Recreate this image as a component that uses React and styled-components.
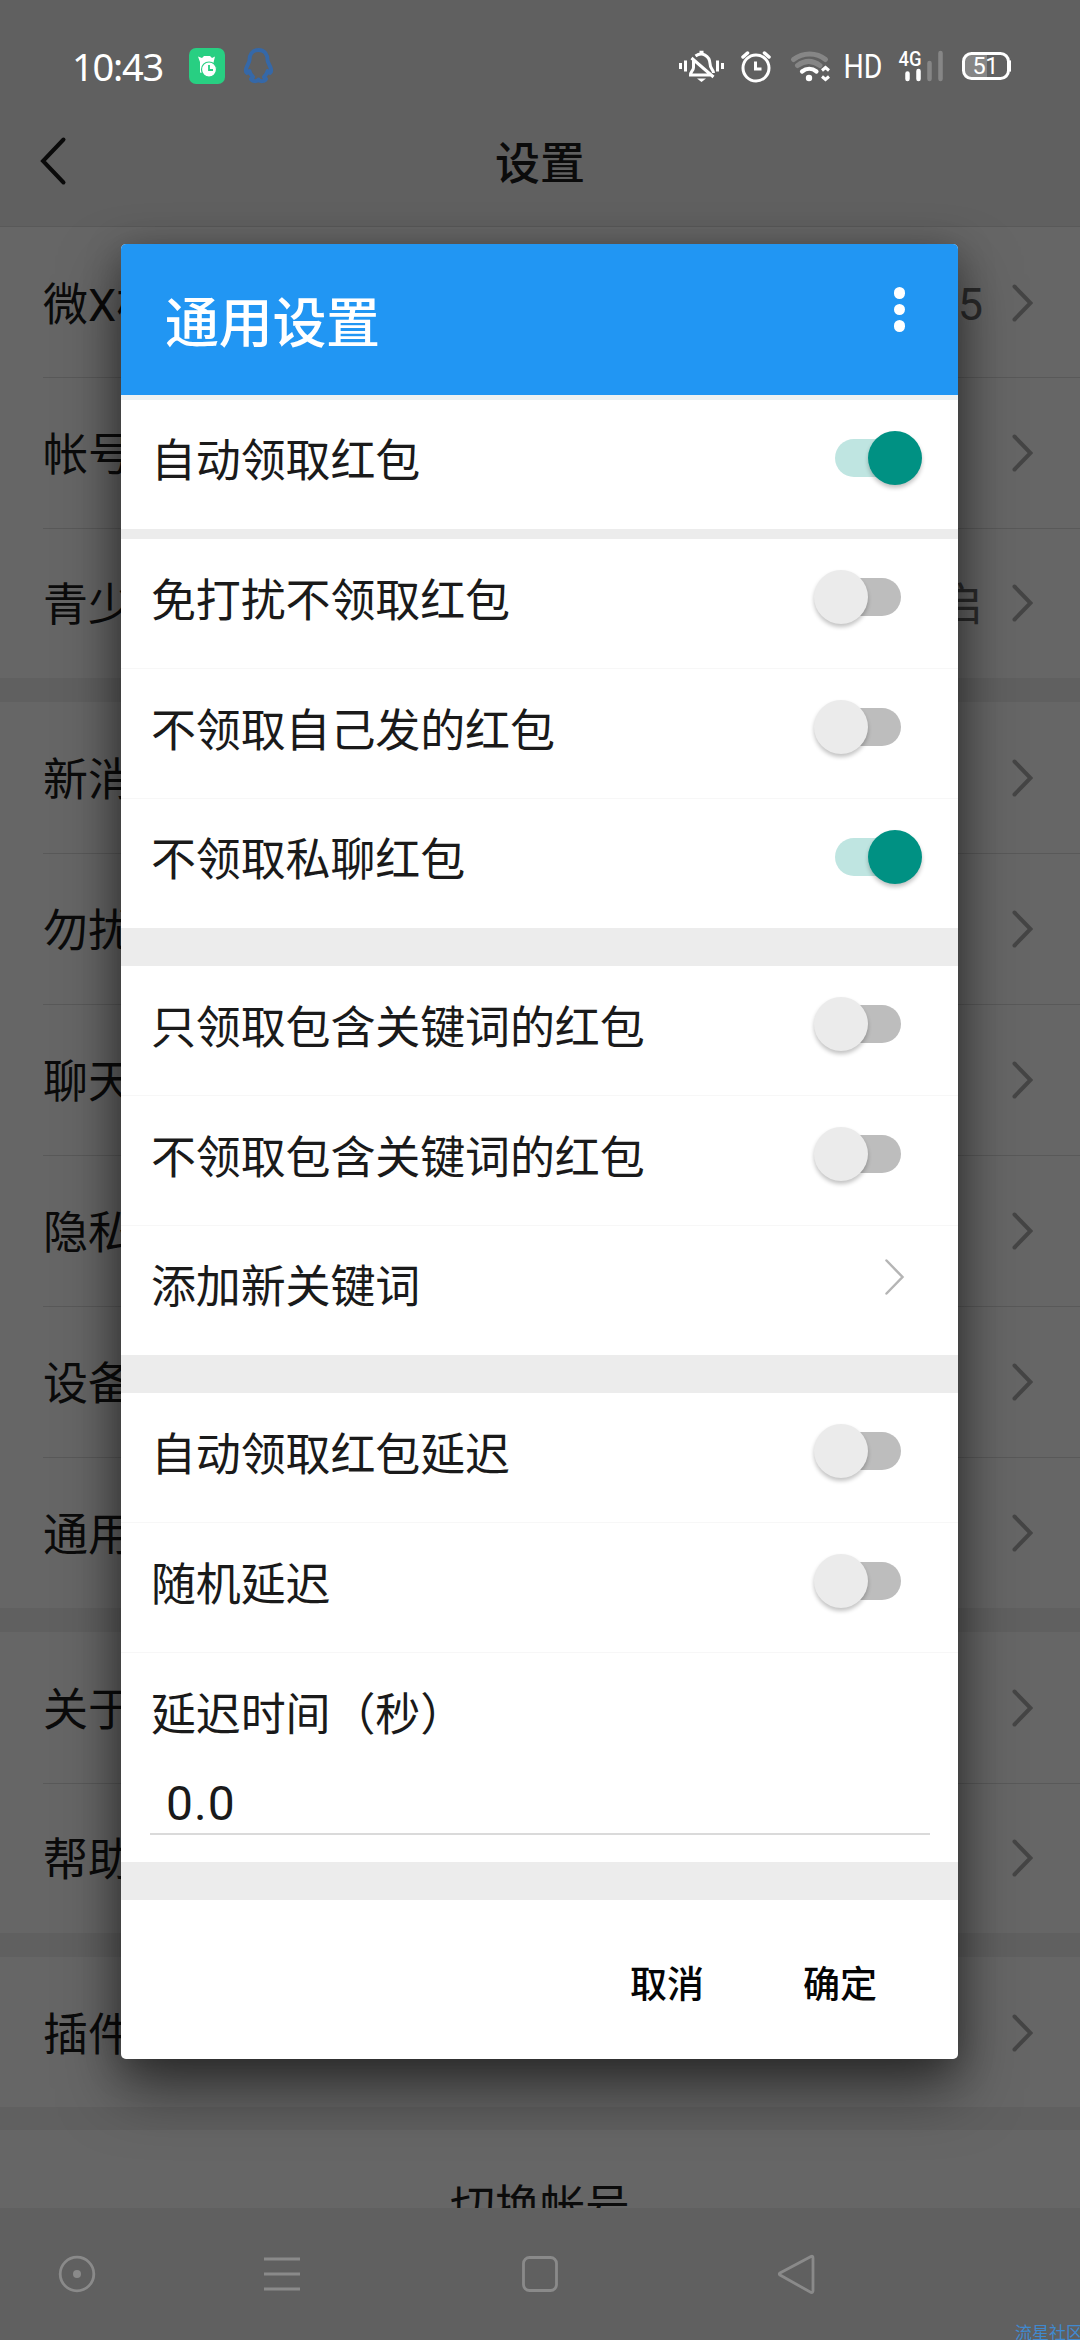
import React from "react";
import styled, { createGlobalStyle } from "styled-components";

const Global = createGlobalStyle`
  * { box-sizing: border-box; }
  html, body { margin: 0; padding: 0; background: #666; }
  body { width: 1080px; height: 2340px; overflow: hidden; }
`;

const Screen = styled.div`
  position: relative;
  width: 1080px;
  height: 2340px;
  overflow: hidden;
  display: flex;
  flex-direction: column;
  background: #606060;
  color: #0b0b0b;
  font-family: Roboto, "Noto Sans CJK SC", sans-serif;
  font-size: 45px;
  line-height: 1;
`;

const StatusBar = styled.header`
  height: 96px;
  flex: none;
  padding: 36px 69px 0 72px;
  display: flex;
  align-items: center;
  justify-content: space-between;
  color: #fff;
`;

const StatusGroup = styled.div`
  display: flex;
  align-items: center;
  height: 60px;
`;

const Clock = styled.span`
  width: 117px;
  font-family: "Noto Sans", Roboto, sans-serif;
  font-size: 38px;
  letter-spacing: -1.2px;
`;

const TitleBar = styled.div`
  height: 131px;
  flex: none;
  display: grid;
  grid-template-columns: 120px 1fr 120px;
  align-items: center;
  border-bottom: 1px solid #595959;
`;

const BackButton = styled.span`
  display: flex;
  padding-left: 39px;
`;

const PageTitle = styled.h1`
  margin: 7px 0 0;
  text-align: center;
  font-size: 45px;
  font-weight: 500;
`;

const List = styled.main`
  flex: 1;
  min-height: 0;
  overflow: hidden;
  display: flex;
  flex-direction: column;
`;

const Group = styled.section`
  flex: none;
  height: ${(p) => p.$height}px;
  margin-bottom: ${(p) => p.$gap ?? 24}px;
  padding-left: 43px;
  display: flex;
  flex-direction: column;
  background: #666;
`;

const Row = styled.div`
  flex: 1;
  display: flex;
  align-items: center;
  padding-right: 47px;
  border-top: 1px solid ${(p) => (p.$first ? "#666" : "#595959")};
`;

const RowLabel = styled.span`
  flex: 1;
  white-space: nowrap;
  padding-top: 5px;
`;

const RowValue = styled.span`
  margin-right: 29px;
  padding-top: 4px;
  color: #2b2b2b;
`;

const SwitchAccount = styled.div`
  flex: none;
  height: 151px;
  padding-top: 3px;
  display: flex;
  align-items: center;
  justify-content: center;
  background: #666;
`;

const NavBar = styled.nav`
  flex: none;
  height: 132px;
  display: flex;
  align-items: center;
  padding-left: 57px;
`;

const NavItem = styled.span`
  display: flex;
  width: 40px;
  margin-right: ${(p) => p.$after}px;
`;

const Watermark = styled.span`
  position: absolute;
  left: 1015px;
  top: 2325px;
  font-size: 17px;
  line-height: 17px;
  white-space: nowrap;
  color: #4089cf;
`;

const Dialog = styled.div`
  position: absolute;
  left: 121px;
  top: 244px;
  width: 837px;
  height: 1815px;
  display: flex;
  flex-direction: column;
  overflow: hidden;
  border-radius: 5px;
  background: #fff;
  color: #1a1a1a;
`;

const DialogShadow = styled.div`
  position: absolute;
  left: 121px;
  top: 244px;
  width: 837px;
  height: 1815px;
  border-radius: 5px;
  box-shadow: 0 30px 60px rgba(0, 0, 0, 0.5), 0 6px 36px rgba(0, 0, 0, 0.26);
`;

const DialogHeader = styled.div`
  flex: none;
  height: 151px;
  padding: 0 53px 0 44px;
  display: flex;
  align-items: center;
  justify-content: space-between;
  background: #2196f3;
  color: #fff;
`;

const DialogTitle = styled.h2`
  margin: 11px 0 0;
  font-size: 54px;
  font-weight: 500;
  letter-spacing: -0.3px;
`;

const MoreDots = styled.span`
  display: flex;
  flex-direction: column;
  gap: 5px;
  margin-bottom: 20px;
`;

const Dot = styled.i`
  width: 11.5px;
  height: 11.5px;
  border-radius: 50%;
  background: #fff;
`;

const Band = styled.div`
  flex: none;
  height: ${(p) => p.$h}px;
  background: ${(p) => p.$color ?? "#ececec"};
`;

const Option = styled.div`
  flex: none;
  height: ${(p) => p.$h ?? 130}px;
  padding: 0 36px 11px 30px;
  display: flex;
  align-items: center;
  justify-content: space-between;
  border-bottom: 1px solid ${(p) => (p.$line ? "#f7f7f7" : "#fff")};
`;

const OptionLabel = styled.span`
  white-space: nowrap;
  padding-top: 6px;
  letter-spacing: -0.13px;
`;

const Track = styled.span`
  display: flex;
  align-items: center;
  width: 66px;
  height: 38px;
  margin-right: 21px;
  margin-top: -2px;
  border-radius: 19px;
  background: ${(p) => (p.$on ? "#bfe5e1" : "#bdbdbd")};
`;

const Thumb = styled.span`
  flex: none;
  width: 54px;
  height: 54px;
  border-radius: 50%;
  margin-left: ${(p) => (p.$on ? 33 : -21)}px;
  background: ${(p) => (p.$on ? "#009183" : "#ebebeb")};
  box-shadow: 0 3px 4px rgba(0, 0, 0, 0.24);
`;

const ArrowSlot = styled.span`
  display: flex;
  margin: -16px 17px 0 0;
`;

const Field = styled.div`
  flex: none;
  height: 79px;
  padding: 0 28px 0 29px;
`;

const FieldValue = styled.div`
  height: 52px;
  padding: 0 0 0 16px;
  border-bottom: 2px solid #dadada;
  font-size: 48px;
  line-height: 41px;
  letter-spacing: 1px;
`;

const Actions = styled.div`
  flex: 1;
  display: flex;
  justify-content: flex-end;
  align-items: center;
  gap: 99px;
  padding: 12px 81px 0 0;
`;

const ActionButton = styled.button`
  border: 0;
  padding: 0;
  background: none;
  font: 500 37px/1 Roboto, "Noto Sans CJK SC", sans-serif;
  color: #050505;
`;

const Chevron = ({ color = "#454545", width = 4 }) => (
  <svg width="21" height="38" viewBox="0 0 21 38" fill="none">
    <path d="M2.5 2.5 18.5 19 2.5 35.5" stroke={color} strokeWidth={width} strokeLinecap="round" />
  </svg>
);

const Toggle = ({ on }) => (
  <Track $on={on}>
    <Thumb $on={on} />
  </Track>
);

const AppIcons = () => (
  <svg width="90" height="60" viewBox="189 36 90 60" fill="none">
    <rect x="189" y="48" width="36" height="36" rx="7" fill="#28cf82" />
    <path d="M198 56.500l4 1.500 2-2h6l2 2 3-1.500-1 4-1 4h-6l-3 4v5l-4-1V62Z" fill="#fff" />
    <circle cx="209" cy="69.500" r="7.500" fill="#fff" stroke="#28cf82" strokeWidth="1.200" />
    <path d="M209 65v5h4" stroke="#28cf82" strokeWidth="1.800" />
    <path d="M258.500 50c-6.500 0-9 5-9 10 0 2-1.500 4-3 7.500-1 3-.500 5 .500 5.500l2.500-2c.500 3 2 4.500 3.500 6l-2 2c1 2.500 6 3 7.500.500 1.500 2.500 6.500 2 7.500-.500l-2-2c1.500-1.500 3-3 3.500-6l2.500 2c1-.500 1.500-2.500.500-5.500-1.500-3.500-3-5.500-3-7.500 0-5-2.500-10-9-10Z" stroke="#3568a8" strokeWidth="4" strokeLinejoin="round" />
  </svg>
);

const StatusIcons = () => (
  <svg width="336" height="60" viewBox="674 36 336 60" fill="none" stroke="#fff">
    <path d="M679.500 63v6M684.500 60.500v11M716.500 60.500v11M721.500 63v6" strokeWidth="3" />
    <path d="M694.500 56c6.500-4.500 14-.500 14.500 7.500 0 5.500 3.500 6 3.500 9.500M692.500 59.500v8c0 3-3 4-3 7.500h20M690.500 58l22 19" strokeWidth="3" />
    <path d="M698.500 52.500h4" strokeWidth="3.500" />
    <path d="M696 78.500h9l-4.500 3.500Z" fill="#fff" stroke="none" />
    <circle cx="755" cy="68" r="13" strokeWidth="3" />
    <path d="M742 57l4.500-4M768 57l-4.500-4" strokeWidth="3.500" strokeLinecap="round" />
    <path d="M754.500 61.500v7.500h6" strokeWidth="3" />
    <path d="M792.500 59.500c9.500-7.500 23-7.500 32 0" stroke="#868686" strokeWidth="5" strokeLinecap="round" />
    <path d="M796.500 65.500c7.500-5.500 15-5.500 22.500 0" stroke="#868686" strokeWidth="5" strokeLinecap="round" />
    <path d="M801 71.500c4.500-3.500 10-3.500 14.500 0" strokeWidth="4.200" strokeLinecap="round" />
    <circle cx="808" cy="78" r="3.200" fill="#fff" stroke="none" />
    <path d="M821 70.500l3.500-3 3.500 3M821 76.500l3.500 3 3.500-3" strokeWidth="3" />
    <path d="M906.500 73.500v5.500M917.500 71v8" strokeWidth="4.500" strokeLinecap="round" />
    <path d="M928.500 63v16M939.500 53v26" stroke="#868686" strokeWidth="4.500" strokeLinecap="round" />
    <path d="M969 54h17v25h-17a6 6 0 0 1-6-6V60a6 6 0 0 1 6-6Z" fill="#868686" stroke="none" />
    <rect x="962.500" y="53.500" width="45" height="25" rx="8" strokeWidth="3" />
    <path d="M1009 60.500q2 5.500 0 11" strokeWidth="3" />
    <g fill="#fff" stroke="none" fontFamily="Roboto, sans-serif">
      <text x="842.500" y="78" fontSize="34" textLength="39" lengthAdjust="spacingAndGlyphs">HD</text>
      <text x="897.500" y="65.500" fontSize="20.500" textLength="23" fontWeight="500" lengthAdjust="spacingAndGlyphs">4G</text>
      <text x="971.500" y="74" fontSize="23.500" textLength="26">51</text>
    </g>
  </svg>
);

const groups = [
  { height: 451, rows: [["微X模", "5"], ["帐号"], ["青少", "启"]] },
  { height: 906, rows: [["新消"], ["勿扰"], ["聊天"], ["隐私"], ["设备"], ["通用"]] },
  { height: 301, rows: [["关于"], ["帮助"]] },
  { height: 150, gap: 23, rows: [["插件"]] },
];

const NavIcon = ({ children }) => (
  <svg width="40" height="42" viewBox="0 0 40 42" fill="none" stroke="#8a8a8a" strokeWidth="2.800">
    {children}
  </svg>
);

export default function App() {
  return (
    <Screen>
      <Global />
      <StatusBar>
        <StatusGroup>
          <Clock>10:43</Clock>
          <AppIcons />
        </StatusGroup>
        <StatusGroup>
          <StatusIcons />
        </StatusGroup>
      </StatusBar>
      <TitleBar>
        <BackButton>
          <svg width="30" height="50" viewBox="0 0 30 50" fill="none">
            <path d="M24.500 3.500 4 25 24.500 46.500" stroke="#0a0a0a" strokeWidth="4" strokeLinecap="round" />
          </svg>
        </BackButton>
        <PageTitle>设置</PageTitle>
      </TitleBar>
      <List>
        {groups.map((g) => (
          <Group key={g.height} $height={g.height} $gap={g.gap}>
            {g.rows.map(([label, value], i) => (
              <Row key={label} $first={i === 0}>
                <RowLabel>{label}</RowLabel>
                {value && <RowValue>{value}</RowValue>}
                <Chevron />
              </Row>
            ))}
          </Group>
        ))}
        <SwitchAccount>切换帐号</SwitchAccount>
      </List>
      <DialogShadow />
      <NavBar>
        <NavItem $after={165}>
          <NavIcon>
            <circle cx="20" cy="21" r="16.800" />
            <circle cx="20" cy="21" r="4" fill="#8a8a8a" stroke="none" />
          </NavIcon>
        </NavItem>
        <NavItem $after={218}>
          <NavIcon>
            <path d="M2 6h36M2 21h36M2 36h36" />
          </NavIcon>
        </NavItem>
        <NavItem $after={216}>
          <NavIcon>
            <rect x="3.500" y="4.500" width="33" height="33" rx="6" />
          </NavIcon>
        </NavItem>
        <NavItem $after={0}>
          <NavIcon>
            <path d="M35 3.500 4 20q-1.500 1 0 2L35 39.500q2 .500 2-2V5q0-2.500-2-1.500Z" />
          </NavIcon>
        </NavItem>
      </NavBar>
      <Watermark>流星社区</Watermark>

      <Dialog>
        <DialogHeader>
          <DialogTitle>通用设置</DialogTitle>
          <MoreDots>
            <Dot />
            <Dot />
            <Dot />
          </MoreDots>
        </DialogHeader>
        <Band $h={5} $color="#eef2f2" />
        <Option $h={129}>
          <OptionLabel>自动领取红包</OptionLabel>
          <Toggle on />
        </Option>
        <Band $h={10} />
        <Option $line>
          <OptionLabel>免打扰不领取红包</OptionLabel>
          <Toggle />
        </Option>
        <Option $line>
          <OptionLabel>不领取自己发的红包</OptionLabel>
          <Toggle />
        </Option>
        <Option $h={129}>
          <OptionLabel>不领取私聊红包</OptionLabel>
          <Toggle on />
        </Option>
        <Band $h={38} />
        <Option $line>
          <OptionLabel>只领取包含关键词的红包</OptionLabel>
          <Toggle />
        </Option>
        <Option $line>
          <OptionLabel>不领取包含关键词的红包</OptionLabel>
          <Toggle />
        </Option>
        <Option $h={129}>
          <OptionLabel>添加新关键词</OptionLabel>
          <ArrowSlot>
            <Chevron color="#b5b5b5" width={2.5} />
          </ArrowSlot>
        </Option>
        <Band $h={38} />
        <Option $line>
          <OptionLabel>自动领取红包延迟</OptionLabel>
          <Toggle />
        </Option>
        <Option $line>
          <OptionLabel>随机延迟</OptionLabel>
          <Toggle />
        </Option>
        <Option>
          <OptionLabel>延迟时间（秒）</OptionLabel>
        </Option>
        <Field>
          <FieldValue>0.0</FieldValue>
        </Field>
        <Band $h={38} />
        <Actions>
          <ActionButton>取消</ActionButton>
          <ActionButton>确定</ActionButton>
        </Actions>
      </Dialog>
    </Screen>
  );
}
